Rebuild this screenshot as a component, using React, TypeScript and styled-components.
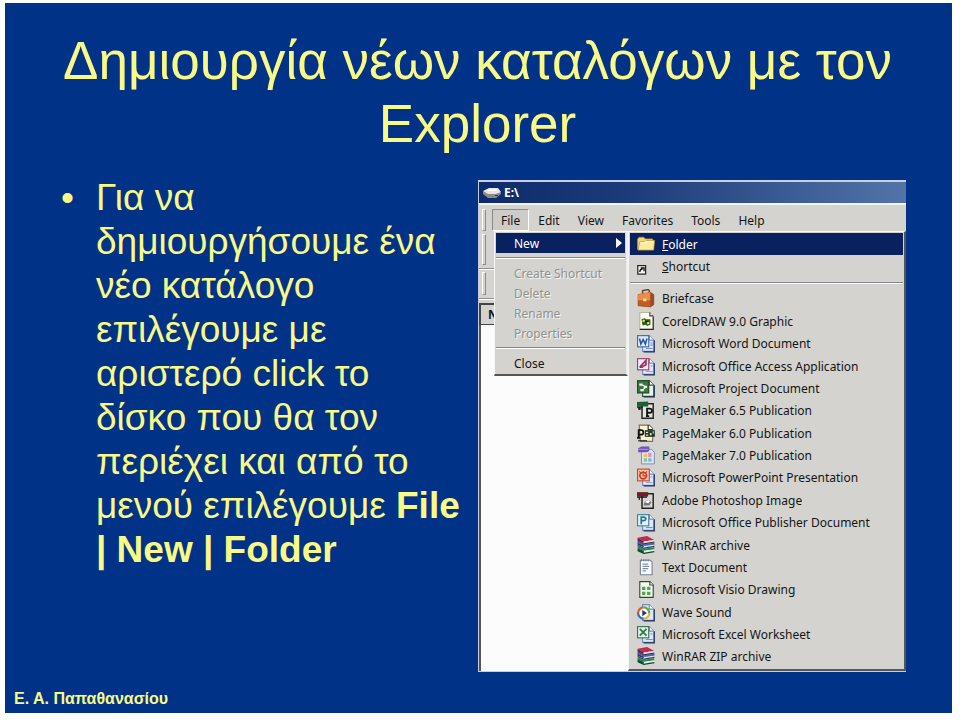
import React from "react";
import styled, { createGlobalStyle, css } from "styled-components";

const face = "#d4d3cf";
const navy = "#0a2160";
const yellow = "#fbf985";

const GlobalStyle = createGlobalStyle`
  * { box-sizing: border-box; }
  body {
    margin: 0;
    background: #fefefe;
    font-family: "Liberation Sans", Arial, sans-serif;
  }
`;

const Page = styled.div`
  display: flex;
  min-height: 100vh;
  padding: 3px 8px 7px 5px;
`;

const Slide = styled.main`
  flex: 1;
  display: flex;
  flex-direction: column;
  padding: 26px 46px 2px 9px;
  background: #003388;
  color: ${yellow};
`;

const Title = styled.h1`
  margin: 0 0 21px;
  padding-left: 35px;
  font-size: 53px;
  line-height: 63px;
  font-weight: 400;
  text-align: center;
`;

const Columns = styled.div`
  flex: 1;
  display: grid;
  grid-template-columns: 464fr 428fr;
  align-items: start;
`;

const Bullets = styled.ul`
  margin: 0;
  padding: 0 0 0 47px;
  list-style: none;
  font-size: 37px;
  line-height: 44px;
  white-space: nowrap;
`;

const Bullet = styled.li`
  display: flex;
  gap: 22px;
`;

const Footer = styled.footer`
  font-size: 16px;
  line-height: 24px;
  font-weight: 700;
`;

const Window = styled.section`
  display: flex;
  flex-direction: column;
  min-height: 492px;
  margin-top: 4px;
  border: 1px solid #c9ccd6;
  border-top: 2px solid #c9cfdd;
  border-right: 0;
  background: ${face};
  color: #151515;
  font-family: "Noto Sans", "DejaVu Sans Condensed", sans-serif;
  font-size: 12px;
`;

const TitleBar = styled.header`
  display: flex;
  align-items: center;
  gap: 2px;
  height: 21px;
  padding: 0 3px;
  background: linear-gradient(90deg, #0d2a6c, #1d3b79 35%, #5274a8);
  color: #fff;
  font-weight: 700;
`;

const MenuBar = styled.nav`
  display: flex;
  align-items: stretch;
  height: 28px;
  padding: 4px 0 0 3px;
  border-top: 2px solid #f4f4f2;
`;

const Grip = styled.span`
  width: 4px;
  margin-right: 6px;
  border: 1px solid #8c8c8c;
  border-top-color: #fff;
  border-left-color: #fff;
`;

const MenuButton = styled.button<{ $open?: boolean }>`
  padding: 0 8px;
  border: 1px solid transparent;
  background: none;
  color: inherit;
  font: inherit;
  ${(p) =>
    p.$open &&
    css`
      border-color: #8a8a8a #fff #fff #8a8a8a;
      background: #cdccc8;
    `}
`;

const Body = styled.div`
  flex: 1;
  display: grid;
  grid-template: 1fr / 1fr;
`;

const Client = styled.div`
  grid-area: 1 / 1;
  display: flex;
  flex-direction: column;
`;

const Band = styled.div<{ $tall?: boolean }>`
  display: flex;
  height: ${(p) => (p.$tall ? 38 : 30)}px;
  padding: 3px;
  border-bottom: 1px solid #8f8f8f;
  box-shadow: 0 1px 0 #fff;
`;

const ListHead = styled.div`
  height: 22px;
  margin-top: 4px;
  padding: 2px 7px;
  border: 2px solid #444;
  border-width: 2px 0 1px 2px;
  line-height: 16px;
  font-weight: 700;
`;

const ListArea = styled.div`
  flex: 1;
  border-left: 2px solid #555;
  background: #fcfcfc;
`;

const Menus = styled.div`
  grid-area: 1 / 1;
  display: grid;
  grid-template-columns: 134fr 278fr;
  align-items: start;
  padding-left: 15px;
  z-index: 1;
`;

const Menu = styled.div<{ $fill?: boolean }>`
  display: flex;
  flex-direction: column;
  align-self: ${(p) => (p.$fill ? "stretch" : "start")};
  padding: 1px;
  border: 1px solid #f6f6f4;
  border-right: 2px solid ${(p) => (p.$fill ? "#555" : "#eee")};
  border-bottom: 2px solid #555;
  background: ${face};
`;

const Item = styled.button<{ $active?: boolean }>`
  display: flex;
  align-items: center;
  height: 20px;
  padding: 0 3px 0 18px;
  border: 0;
  background: ${(p) => (p.$active ? navy : "transparent")};
  color: ${(p) => (p.$active ? "#fff" : "inherit")};
  font: inherit;
  text-align: left;
  white-space: nowrap;
  &:disabled {
    color: #92918e;
    text-shadow: 1px 1px 0 #f4f4f2;
  }
`;

const NewItem = styled(Item)`
  flex: 1;
  gap: 6px;
  height: auto;
  min-height: 22px;
  padding: 0 7px;
`;

const Label = styled.span`
  flex: 1;
`;

const Rule = styled.hr`
  width: 100%;
  height: 2px;
  margin: 4px 0;
  border: 0;
  border-top: 1px solid #85858a;
  border-bottom: 1px solid #fff;
`;

const Glyph = styled.svg`
  flex: none;
  width: 19px;
  height: 19px;
`;

const Arrow = styled.svg`
  width: 6px;
  height: 10px;
`;

const Drive = styled.svg`
  width: 20px;
  height: 14px;
`;

const Sheet = ({ x = 5, fill = "#dce7fb", edge = "#6f8cc4" }) => (
  <>
    <path d={`M${x} 1.5h${11 - x}l4 4v10H${x}z`} fill={fill} stroke={edge} />
    <path d="M11 1.5v4h4" fill="#fff" stroke={edge} />
    <path d="M15.5 5.5v10.5H6" fill="none" stroke="#1e3158" />
  </>
);

const Badge = ({ color, children }: { color: string; children: React.ReactNode }) => (
  <>
    <rect x=".5" y="1.5" width="10" height="10" fill="#e6eef9" stroke={color} />
    {children}
  </>
);

const Books = () => (
  <>
    <path d="M.5 1.5L9 0l6.500 3.500L6 5z" fill="#c02a56" />
    <path d="M.5 1.500L6 5v1.500L.5 3.800z" fill="#7a1437" />
    <path d="M6 5l9.500-1.500V5L6 6.500z" fill="#e9dfe2" />
    <path d="M.5 5.800L6 8.500l9.500-1.500v1.500L6 10 .5 7.800z" fill="#26377c" />
    <path d="M.5 4.800L6 7.300l9.500-1.500v1.400L6 8.700.5 6.300z" fill="#3f63b8" />
    <path d="M6 9l9.500-1.500v1.200L6 10.200z" fill="#dfe5f2" />
    <path d="M.5 9L6 11.500l9.500-1.500v2L6 13.500.5 11z" fill="#1f8a5a" />
    <path d="M6 13.300l9.500-1.500v1.500L6 15z" fill="#dcefe5" />
    <path d="M.5 11L6 13.500V15l9.500-1.500v1L6 16.200.5 13.600z" fill="#0f4a30" />
    <path d="M.5 4.300L6 7l9.500-1.600M.5 8.400L6 10.900l9.500-1.600" fill="none" stroke="#1b1428" strokeWidth=".8" />
  </>
);

const art: Record<string, React.ReactNode> = {
  folder: (
    <>
      <path d="M.5 13V3.500L2 2h4l1.500 1.500H14V6" fill="#f2d774" stroke="#b88d2d" strokeWidth=".7" />
      <path d="M1 13.500L2.500 6H7l1-1h7.700l-.8 8.500z" fill="#ffeb9c" stroke="#c29a3c" strokeWidth=".7" />
      <path d="M3 7h4l1-1h6.500" fill="none" stroke="#fffbe0" />
    </>
  ),
  shortcut: (
    <>
      <rect x=".7" y="7.700" width="7" height="7.600" fill="#f7f7f7" stroke="#252525" strokeWidth="1.100" />
      <path d="M2.500 13.500c0-2 1-2.800 2.500-2.800M3.400 9.700h2.900v3" fill="none" stroke="#111" strokeWidth="1.200" />
    </>
  ),
  briefcase: (
    <>
      <path d="M5 4V1.500l5-1 1 1V4" fill="none" stroke="#70401e" strokeWidth="1.300" />
      <path d="M1 5l11-2 3 2v9l-3 2-11-1z" fill="#bf5d24" stroke="#8b431c" strokeWidth=".6" />
      <path d="M1 5l11-2v7L1 10z" fill="#e88e48" />
      <path d="M12 3l3 2v9l-3 2z" fill="#9b4b22" />
      <path d="M5.500 8.500h3v2.500h-3z" fill="#ffd68a" />
    </>
  ),
  corel: (
    <>
      <path d="M2.500.5h9l3 3v12h-12z" fill="#fffff0" stroke="#b7b59c" />
      <path d="M11.500.5v3h3" fill="#fff" stroke="#333" />
      <path d="M14.500 4v11.500h-12" fill="none" stroke="#222" />
      <path d="M4 6.500l3-1 1 1h4v5l-3 1-1-1-3 .5z" fill="#286122" />
      <path d="M5 7h2v2H5zM9 9h2v2H9z" fill="#ede23c" />
      <path d="M7 8h3v1H7z" fill="#111" />
    </>
  ),
  word: (
    <>
      <Sheet />
      <path d="M12 8h2M12 10h2M8 13h6" stroke="#6f91cf" />
      <Badge color="#3c66b0"><path d="M2.200 4l1.300 5L5.500 5l2 4 1.400-5" fill="none" stroke="#2855a8" strokeWidth="1.400" /></Badge>
    </>
  ),
  access: (
    <>
      <Sheet />
      <path d="M12 8h2M8 13h6" stroke="#8fa5d7" />
      <Badge color="#a33b63"><path d="M2.500 9l5.500-6v4L5 8.500M2.300 9h3" fill="none" stroke="#a9285b" strokeWidth="1.500" /></Badge>
    </>
  ),
  project: (
    <>
      <Sheet fill="#e9f0e4" edge="#38513b" />
      <rect x=".5" y="1.500" width="10" height="11" fill="#397643" stroke="#184b25" />
      <path d="M2 4h3v2H2zM6 6h3v2H6zM3 9h3v2H3z" fill="#e8f5dd" />
      <path d="M4 5l4 2-3 3" stroke="#fff" fill="none" />
    </>
  ),
  pm65: (
    <>
      <path d="M4.500 2.500h10v13h-10z" fill="#e6e6df" stroke="#222" strokeWidth="1.300" />
      <path d="M0 1l10-.5V5H0z" fill="#176331" />
      <path d="M0 5.500h5M2 5v3M1 7h3" stroke="#111" />
      <path d="M9 13.500V6.800h2.200c3 0 3 3.700 0 3.700H9M8 13.500h3" fill="none" stroke="#111" strokeWidth="1.600" />
    </>
  ),
  pm60: (
    <>
      <path d="M2 1h9l3 3v11.500H3z" fill="#f7f3cd" stroke="#79745a" />
      <path d="M10 1v4h4" fill="#fff" stroke="#222" />
      <path d="M1.500 12.500V5.500h2c3 0 3 4 0 4h-2M0 12.500h3" fill="none" stroke="#111" strokeWidth="1.600" />
      <path d="M7 5.500h9v6H7z" fill="#26362c" />
      <path d="M8 7h2v1H8zM8 9.500h2v1H8zM11.500 8h1.500v2h-1.500zM14 6.500h1v2h-1z" fill="#e9e4b2" />
      <path d="M1 15h8" stroke="#222" />
    </>
  ),
  pm70: (
    <>
      <path d="M4 3h9l2.500 2.500V16H4z" fill="#dde8f5" stroke="#7583a6" strokeWidth=".8" />
      <path d="M1 2l3-1.500h7v4l-2 1H1z" fill="#7252b5" />
      <path d="M1 3h9" stroke="#ae8fe2" />
      <path d="M6 7h3v3H6z" fill="#f0bd5f" />
      <path d="M10 6h3v4h-3z" fill="#e992b0" />
      <path d="M6 11h3v3H6z" fill="#86c58f" />
      <path d="M10 11h3v3h-3z" fill="#78b5e4" />
    </>
  ),
  powerpoint: (
    <>
      <Sheet />
      <path d="M12 8h2M8 13h6" stroke="#8fa5d7" />
      <rect x=".5" y="1" width="10.500" height="10.500" fill="#f8c4ac" stroke="#c4492b" />
      <circle cx="5.500" cy="6.800" r="3" fill="none" stroke="#c63f22" strokeWidth="1.500" />
      <path d="M5.500 3v4h3M2 3l2 2M9 3L7 5" stroke="#c63f22" fill="none" />
    </>
  ),
  photoshop: (
    <>
      <path d="M4.500 2.500h10v13h-10z" fill="#d8d8d8" stroke="#222" strokeWidth="1.300" />
      <path d="M0 1h10v4H0z" fill="#711d27" />
      <path d="M0 5.500h9M2 5v3" stroke="#111" />
      <path d="M6 13c0-3 2-5 5-5l2 2-2 3z" fill="#777" />
      <path d="M7 10l3-2 2 1-2 2z" fill="#fff" />
    </>
  ),
  publisher: (
    <>
      <Sheet />
      <path d="M8 13h6" stroke="#6f91cf" />
      <Badge color="#3b8498"><path d="M3.800 10V3.700h2c2.700 0 2.700 3.200 0 3.200h-2" fill="none" stroke="#21788d" strokeWidth="1.500" /></Badge>
    </>
  ),
  rar: <Books />,
  text: (
    <>
      <path d="M3 2h9l1.500 1.500V15H3z" fill="#f9fbff" stroke="#778496" />
      <path d="M4 1v2M6 1v2M8 1v2M10 1v2" stroke="#6d7480" strokeWidth=".8" />
      <path d="M5 5.500h5M5 7.500h6M5 9.500h5M5 11.500h3" stroke="#8191ad" />
    </>
  ),
  visio: (
    <>
      <path d="M2.500 1.500h9l3 3v11h-12z" fill="#f2fff0" stroke="#244d2b" />
      <path d="M11.500 1.500v3h3" fill="#fff" stroke="#244d2b" />
      <path d="M4.500 6h3v3h-3zM9 6h3v3H9zM4.500 10.500h3v3h-3zM9 10.500h3v3H9z" fill="#55a253" />
    </>
  ),
  wave: (
    <>
      <Sheet />
      <circle cx="6" cy="9" r="5.200" fill="#fff" />
      <path d="M1 9a5 5 0 015-5" fill="none" stroke="#e45b2b" strokeWidth="2" />
      <path d="M6 4a5 5 0 015 5" fill="none" stroke="#69a83b" strokeWidth="2" />
      <path d="M11 9a5 5 0 01-5 5" fill="none" stroke="#f0b42c" strokeWidth="2" />
      <path d="M6 14a5 5 0 01-5-5" fill="none" stroke="#366dc0" strokeWidth="2" />
      <path d="M4.700 6.200L9 9l-4.300 2.800z" fill="#253b73" />
    </>
  ),
  excel: (
    <>
      <Sheet />
      <path d="M12 8h2M8 13h6" stroke="#6f91cf" />
      <Badge color="#347440"><path d="M2.500 3.500l6 6M8.500 3.500l-6 6" stroke="#2c823c" strokeWidth="1.700" /></Badge>
    </>
  ),
};

const types: [string, string][] = [
  ["briefcase", "Briefcase"],
  ["corel", "CorelDRAW 9.0 Graphic"],
  ["word", "Microsoft Word Document"],
  ["access", "Microsoft Office Access Application"],
  ["project", "Microsoft Project Document"],
  ["pm65", "PageMaker 6.5 Publication"],
  ["pm60", "PageMaker 6.0 Publication"],
  ["pm70", "PageMaker 7.0 Publication"],
  ["powerpoint", "Microsoft PowerPoint Presentation"],
  ["photoshop", "Adobe Photoshop Image"],
  ["publisher", "Microsoft Office Publisher Document"],
  ["rar", "WinRAR archive"],
  ["text", "Text Document"],
  ["visio", "Microsoft Visio Drawing"],
  ["wave", "Wave Sound"],
  ["excel", "Microsoft Excel Worksheet"],
  ["rar", "WinRAR ZIP archive"],
];

const Icon = ({ name }: { name: string }) => (
  <Glyph viewBox="0 0 17 17" aria-hidden="true">{art[name]}</Glyph>
);

export default function App() {
  return (
    <Page>
      <GlobalStyle />
      <Slide>
        <Title>
          Δημιουργία νέων καταλόγων με τον
          <br />
          Explorer
        </Title>
        <Columns>
          <Bullets>
            <Bullet>
              <span>•</span>
              <span>
                Για να<br />
                δημιουργήσουμε ένα<br />
                νέο κατάλογο<br />
                επιλέγουμε με<br />
                αριστερό click το<br />
                δίσκο που θα τον<br />
                περιέχει και από το<br />
                μενού επιλέγουμε <b>File</b><br />
                <b>| New | Folder</b>
              </span>
            </Bullet>
          </Bullets>
          <Window>
            <TitleBar>
              <Drive viewBox="0 0 20 14" aria-hidden="true">
                <path d="M1 5l6-3h9l3 4-5 4H6z" fill="#e6e5df" />
                <path d="M1 5l5 3h8l5-2v2l-5 4H6L1 8z" fill="#8b8a86" />
                <path d="M6 3.500h8l2 1.500H5z" fill="#fff" />
                <path d="M13 9.500h3" stroke="#3c3c3c" />
              </Drive>
              <span>E:\</span>
            </TitleBar>
            <MenuBar>
              <Grip />
              <MenuButton $open>File</MenuButton>
              <MenuButton>Edit</MenuButton>
              <MenuButton>View</MenuButton>
              <MenuButton>Favorites</MenuButton>
              <MenuButton>Tools</MenuButton>
              <MenuButton>Help</MenuButton>
            </MenuBar>
            <Body>
              <Client>
                <Band $tall><Grip /></Band>
                <Band><Grip /></Band>
                <ListHead>N</ListHead>
                <ListArea />
              </Client>
              <Menus>
                <Menu>
                  <Item $active>
                    <Label>New</Label>
                    <Arrow viewBox="0 0 6 10" aria-hidden="true">
                      <path d="M0 0l6 5-6 5z" fill="#fff" />
                    </Arrow>
                  </Item>
                  <Rule />
                  <Item disabled>Create Shortcut</Item>
                  <Item disabled>Delete</Item>
                  <Item disabled>Rename</Item>
                  <Item disabled>Properties</Item>
                  <Rule />
                  <Item>Close</Item>
                </Menu>
                <Menu $fill>
                  <NewItem $active>
                    <Icon name="folder" />
                    <span><u>F</u>older</span>
                  </NewItem>
                  <NewItem>
                    <Icon name="shortcut" />
                    <span><u>S</u>hortcut</span>
                  </NewItem>
                  <Rule />
                  {types.map(([icon, label]) => (
                    <NewItem key={label}>
                      <Icon name={icon} />
                      <span>{label}</span>
                    </NewItem>
                  ))}
                </Menu>
              </Menus>
            </Body>
          </Window>
        </Columns>
        <Footer>Ε. Α. Παπαθανασίου</Footer>
      </Slide>
    </Page>
  );
}
